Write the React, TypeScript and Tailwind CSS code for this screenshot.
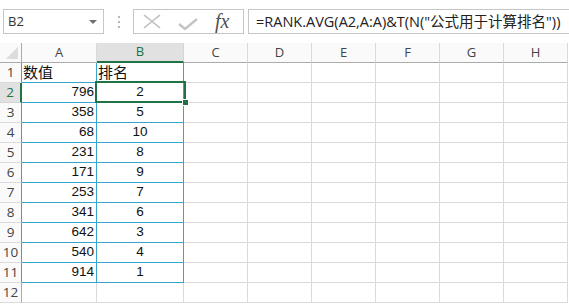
import React from 'react'

const cols = ['A', 'B', 'C', 'D', 'E', 'F', 'G', 'H']

const data: [number, number][] = [
  [796, 2],
  [358, 5],
  [68, 10],
  [231, 8],
  [171, 9],
  [253, 7],
  [341, 6],
  [642, 3],
  [540, 4],
  [914, 1],
]

const numFont = { fontFamily: '"Liberation Sans", Arial, sans-serif' }
const uiFont = { fontFamily: '"Open Sans", "Noto Sans CJK SC", sans-serif' }
const cjkFont = { fontFamily: '"Noto Sans CJK SC", "Noto Sans", sans-serif' }

export default function App() {
  const rows = Array.from({ length: 12 }, (_, i) => i + 1)

  return (
    <div className="w-[569px] h-[304px] bg-white overflow-hidden text-[#222]">
      {/* Formula bar */}
      <div className="h-[43px] flex items-start pt-[9px] pl-[3px]">
        <div className="w-[101px] h-[25px] border border-[#c6c6c6] flex items-center justify-between pl-[4px] pr-[6px]">
          <span className="text-[13px] text-[#333]" style={uiFont}>B2</span>
          <span className="w-0 h-0 border-l-[4px] border-r-[4px] border-t-[4px] border-l-transparent border-r-transparent border-t-[#707070]" />
        </div>
        <div className="w-[29px] h-[25px] flex flex-col items-center justify-center gap-[3px]">
          <span className="w-[2px] h-[2px] bg-[#b8b8b8]" />
          <span className="w-[2px] h-[2px] bg-[#b8b8b8]" />
          <span className="w-[2px] h-[2px] bg-[#b8b8b8]" />
        </div>
        <div className="w-[111px] h-[25px] border border-[#c6c6c6] flex items-center">
          <svg width="18" height="15" viewBox="0 0 18 15" className="ml-[9px]">
            <path d="M1 1 L17 14 M17 1 L1 14" stroke="#bcbcbc" strokeWidth="1.6" fill="none" />
          </svg>
          <svg width="20" height="12" viewBox="0 0 20 12" className="ml-[17px] mt-[4px]">
            <path d="M1 6 L7 11 L19 1" stroke="#c4c4c4" strokeWidth="2.4" fill="none" />
          </svg>
          <span className="ml-[17px] text-[20px] italic leading-none text-[#505050] -mt-[2px]" style={{ fontFamily: '"Liberation Serif", serif' }}>
            fx
          </span>
        </div>
        <div className="ml-[4px] flex-1 h-[25px] border border-r-0 border-[#c6c6c6] flex items-center pl-[7px]">
          <span className="text-[14.5px] whitespace-nowrap text-[#222]" style={uiFont}>
            =RANK.AVG(A2,A:A)&amp;T(N("公式用于计算排名"))
          </span>
        </div>
      </div>

      {/* Sheet */}
      <div className="relative grid grid-cols-[22px_75px_87px_64px_64px_64px_64px_64px_64px] auto-rows-[20px]">
        {/* corner */}
        <div className="relative box-border border-r border-b border-[#ababab] bg-[#fafafa]">
          <svg width="12" height="12" viewBox="0 0 12 12" className="absolute left-[6px] top-[4px]">
            <path d="M12 0 L12 12 L0 12 Z" fill="#dcdcdc" />
          </svg>
        </div>
        {cols.map((c) => (
          <div
            key={c}
            className={
              c === 'B'
                ? 'box-border border-r border-[#d5d5d5] border-b-2 border-b-[#217346] bg-[#e1e1e1] text-[#217346] flex items-center justify-center text-[13px]'
                : 'box-border border-r border-b border-r-[#dadada] border-b-[#ababab] bg-[#fafafa] text-[#444] flex items-center justify-center text-[13px]'
            }
            style={uiFont}
          >
            {c}
          </div>
        ))}

        {rows.map((r) => {
          const inTable = r <= 11
          const d = r >= 2 && r <= 11 ? data[r - 2] : null
          return (
            <React.Fragment key={r}>
              <div
                className={
                  r === 2
                    ? 'box-border border-b border-b-[#d5d5d5] border-r-2 border-r-[#217346] bg-[#e1e1e1] text-[#217346] flex items-center justify-center text-[13.5px]'
                    : `box-border border-b border-r bg-[#fafafa] border-b-[#dadada] text-[#444] flex items-center justify-center text-[13.5px] ${
                        inTable ? 'border-r-[#36a4cc]' : 'border-r-[#ababab]'
                      }`
                }
                style={uiFont}
              >
                {r}
              </div>
              {/* A */}
              <div
                className={`box-border border-r border-b flex items-center ${
                  inTable ? 'border-[#36a4cc]' : 'border-[#dadada]'
                } ${r === 1 ? 'justify-start pl-[1px]' : 'justify-end pr-[2px]'}`}
              >
                {r === 1 ? (
                  <span className="text-[15px] text-[#111]" style={cjkFont}>数值</span>
                ) : d ? (
                  <span className="text-[13.5px] text-[#111]" style={numFont}>{d[0]}</span>
                ) : null}
              </div>
              {/* B */}
              <div
                className={`box-border border-r border-b flex items-center ${
                  inTable ? 'border-[#36a4cc]' : 'border-[#dadada]'
                } ${r === 1 ? 'justify-start pl-[1px]' : 'justify-center'}`}
              >
                {r === 1 ? (
                  <span className="text-[15px] text-[#111]" style={cjkFont}>排名</span>
                ) : d ? (
                  <span className="text-[13.5px] text-[#111]" style={numFont}>{d[1]}</span>
                ) : null}
              </div>
              {cols.slice(2).map((c) => (
                <div key={c} className="box-border border-r border-b border-[#dadada]" />
              ))}
            </React.Fragment>
          )
        })}

        {/* selection B2 */}
        <div className="absolute left-[95px] top-[38px] w-[91px] h-[22px] border-2 border-[#217346] pointer-events-none">
          <span className="absolute -right-[5px] -bottom-[5px] w-[7px] h-[7px] bg-[#217346] border border-white" />
        </div>
      </div>
    </div>
  )
}
